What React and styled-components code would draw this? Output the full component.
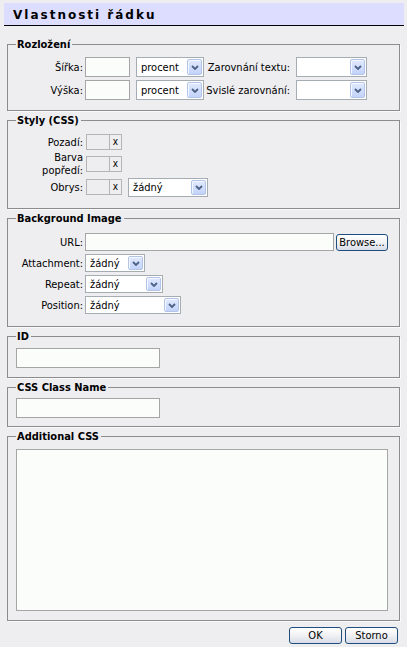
import React from "react";
import styled, { createGlobalStyle } from "styled-components";

const uiFont = `"DejaVu Sans Condensed", "Liberation Sans", sans-serif`;

const GlobalStyle = createGlobalStyle`
	html, body {
		margin: 0;
		padding: 0;
		background: #eeeef0;
	}
	body {
		font-family: ${uiFont};
		font-size: 11px;
		color: #000;
	}
`;

const Page = styled.div`
	width: 407px;
	height: 647px;
	box-sizing: border-box;
	padding: 3px 3px 0 4px;
	display: flex;
	flex-direction: column;
	background: #eeeef0;
`;

const TitleBar = styled.div`
	height: 20px;
	padding-top: 2px;
	display: flex;
	align-items: center;
	padding-left: 9px;
	background: #ddddff;
	border-bottom: 1px solid #000;
	font-family: "DejaVu Sans", Verdana, sans-serif;
	font-size: 12px;
	font-weight: bold;
	letter-spacing: 2px;
`;

const Group = styled.fieldset`
	margin: ${(p) => p.$mt || 0}px 4px 3px 3px;
	padding: ${(p) => p.$pt}px 11px ${(p) => p.$pb}px 8px;
	border: 1px solid #8c8c8c;
	box-shadow: 1px 1px 0 #fafafa;
	min-width: 0;
`;

const Legend = styled.legend`
	padding: 0 2px 0 1px;
	font-weight: bold;
	line-height: 13px;
	height: 13px;
`;

const Rows = styled.div`
	display: flex;
	flex-direction: column;
	gap: ${(p) => p.$gap || 0}px;
`;

const Row = styled.div`
	display: flex;
	align-items: center;
	height: ${(p) => p.$h}px;
`;

const Label = styled.div`
	width: ${(p) => p.$w}px;
	flex-shrink: 0;
	box-sizing: border-box;
	padding-right: 2px;
	text-align: right;
	line-height: 13px;
	white-space: ${(p) => (p.$wrap ? "normal" : "nowrap")};
`;

const TextInput = styled.div`
	box-sizing: border-box;
	width: ${(p) => p.$w}px;
	height: ${(p) => p.$h || 20}px;
	margin-left: ${(p) => p.$ml || 0}px;
	border: 1px solid #a5a5a5;
	background: #fbfdfb;
	flex-shrink: 0;
`;

const SelectBox = styled.div`
	box-sizing: border-box;
	width: ${(p) => p.$w}px;
	height: ${(p) => p.$h || 20}px;
	margin-left: ${(p) => p.$ml || 0}px;
	display: flex;
	align-items: center;
	justify-content: space-between;
	padding: 0 1px 0 4px;
	border: 1px solid #a5acb2;
	background: #fff;
	flex-shrink: 0;
`;

const Arrow = styled.span`
	box-sizing: border-box;
	width: 15px;
	height: calc(100% - 2px);
	display: flex;
	align-items: center;
	justify-content: center;
	border: 1px solid #b2c4e8;
	border-radius: 2px;
	background: linear-gradient(to bottom, #e1e9fd 0%, #c2d3fa 100%);
	box-shadow: inset 1px 1px 0 #f4f7ff;
`;

const ColorBox = styled.div`
	box-sizing: border-box;
	width: 24px;
	height: 16px;
	margin-left: 1px;
	border: 1px solid #b4b4b4;
	flex-shrink: 0;
`;

const ClearBox = styled.div`
	box-sizing: border-box;
	width: 12px;
	height: 16px;
	border: 1px solid #b4b4b4;
	border-left: none;
	display: flex;
	align-items: center;
	justify-content: center;
	font-size: 10px;
	line-height: 1;
	padding-bottom: 1px;
	flex-shrink: 0;
`;

const Button = styled.div`
	box-sizing: border-box;
	width: ${(p) => p.$w || 53}px;
	height: 17px;
	margin-left: ${(p) => p.$ml || 0}px;
	display: flex;
	align-items: center;
	justify-content: center;
	border: 1px solid #1f4d7e;
	border-radius: 3px;
	background: linear-gradient(to bottom, #ffffff 0%, #f3f3f5 45%, #d9dde8 100%);
	flex-shrink: 0;
`;

const TextArea = styled.div`
	box-sizing: border-box;
	width: 372px;
	height: 162px;
	border: 1px solid #a5a5a5;
	background: #fbfdfb;
`;

const Footer = styled.div`
	display: flex;
	justify-content: flex-end;
	margin: 3px 6px 0 0;
`;

function Chevron() {
	return (
		<svg width="8" height="5" viewBox="0 0 8 5">
			<path d="M1 1 L4 4 L7 1" fill="none" stroke="#4d6185" strokeWidth="1.8" />
		</svg>
	);
}

function Select({ value, w, h, ml }) {
	return (
		<SelectBox $w={w} $h={h} $ml={ml}>
			<span>{value}</span>
			<Arrow>
				<Chevron />
			</Arrow>
		</SelectBox>
	);
}

function ColorPick() {
	return (
		<>
			<ColorBox />
			<ClearBox>x</ClearBox>
		</>
	);
}

export default function App() {
	return (
		<Page>
			<GlobalStyle />
			<TitleBar>Vlastnosti řádku</TitleBar>

			<Group $mt={12} $pt={6} $pb={10}>
				<Legend>Rozložení</Legend>
				<Rows $gap={3}>
					<Row $h={20}>
						<Label $w={69}>Šířka:</Label>
						<TextInput $w={45} />
						<Select value="procent" w={68} ml={6} />
						<Label $w={88}>Zarovnání textu:</Label>
						<Select value="" w={71} ml={4} />
					</Row>
					<Row $h={20}>
						<Label $w={69}>Výška:</Label>
						<TextInput $w={45} />
						<Select value="procent" w={68} ml={6} />
						<Label $w={88}>Svislé zarovnání:</Label>
						<Select value="" w={71} ml={4} />
					</Row>
				</Rows>
			</Group>

			<Group $pt={6} $pb={11}>
				<Legend>Styly (CSS)</Legend>
				<Rows>
					<Row $h={18}>
						<Label $w={69}>Pozadí:</Label>
						<ColorPick />
					</Row>
					<Row $h={26}>
						<Label $w={69} $wrap>
							Barva popředí:
						</Label>
						<ColorPick />
					</Row>
					<Row $h={20}>
						<Label $w={69}>Obrys:</Label>
						<ColorPick />
						<Select value="žádný" w={80} h={19} ml={6} />
					</Row>
				</Rows>
			</Group>

			<Group $pt={8} $pb={12}>
				<Legend>Background Image</Legend>
				<Rows $gap={3}>
					<Row $h={18}>
						<Label $w={69}>URL:</Label>
						<TextInput $w={249} $h={18} />
						<Button $w={52} $ml={2}>
							Browse...
						</Button>
					</Row>
					<Row $h={18}>
						<Label $w={69}>Attachment:</Label>
						<Select value="žádný" w={60} h={18} />
					</Row>
					<Row $h={18}>
						<Label $w={69}>Repeat:</Label>
						<Select value="žádný" w={78} h={18} />
					</Row>
					<Row $h={18}>
						<Label $w={69}>Position:</Label>
						<Select value="žádný" w={96} h={18} />
					</Row>
				</Rows>
			</Group>

			<Group $pt={5} $pb={9}>
				<Legend>ID</Legend>
				<TextInput $w={144} />
			</Group>

			<Group $pt={4} $pb={8}>
				<Legend>CSS Class Name</Legend>
				<TextInput $w={144} />
			</Group>

			<Group $pt={6} $pb={9}>
				<Legend>Additional CSS</Legend>
				<TextArea />
			</Group>

			<Footer>
				<Button>OK</Button>
				<Button $ml={3}>Storno</Button>
			</Footer>
		</Page>
	);
}
